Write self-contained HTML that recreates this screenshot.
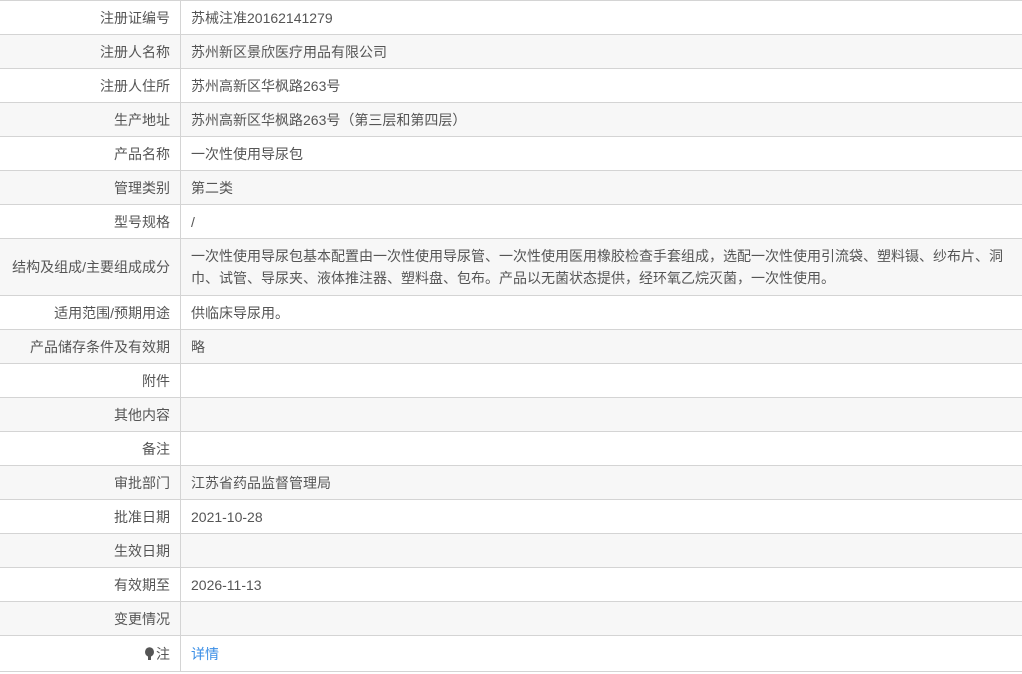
<!DOCTYPE html>
<html><head><meta charset="utf-8"><style>
body{margin:0;background:#fff;font-family:"Liberation Sans","Noto Sans CJK SC",sans-serif;font-size:14px;color:#555;}
.t{width:1022px;border-top:1px solid #d4d4d4;}
.r{display:flex;height:33px;border-bottom:1px solid #d4d4d4;box-sizing:content-box;}
.r:nth-child(even){background:#f7f7f7;}
.l{width:170px;flex:none;text-align:right;padding-right:10px;border-right:1px solid #d4d4d4;display:flex;align-items:center;justify-content:flex-end;}
.v{flex:1;padding:0 10px;display:flex;align-items:center;line-height:22px;}
.tall{height:56px;}
a{color:#3a8ee6;text-decoration:none;}
</style></head><body>
<div class="t">
<div class="r"><div class="l">注册证编号</div><div class="v">苏械注准20162141279</div></div>
<div class="r"><div class="l">注册人名称</div><div class="v">苏州新区景欣医疗用品有限公司</div></div>
<div class="r"><div class="l">注册人住所</div><div class="v">苏州高新区华枫路263号</div></div>
<div class="r"><div class="l">生产地址</div><div class="v">苏州高新区华枫路263号（第三层和第四层）</div></div>
<div class="r"><div class="l">产品名称</div><div class="v">一次性使用导尿包</div></div>
<div class="r"><div class="l">管理类别</div><div class="v">第二类</div></div>
<div class="r"><div class="l">型号规格</div><div class="v">/</div></div>
<div class="r tall"><div class="l">结构及组成/主要组成成分</div><div class="v">一次性使用导尿包基本配置由一次性使用导尿管、一次性使用医用橡胶检查手套组成，选配一次性使用引流袋、塑料镊、纱布片、洞巾、试管、导尿夹、液体推注器、塑料盘、包布。产品以无菌状态提供，经环氧乙烷灭菌，一次性使用。</div></div>
<div class="r"><div class="l">适用范围/预期用途</div><div class="v">供临床导尿用。</div></div>
<div class="r"><div class="l">产品储存条件及有效期</div><div class="v">略</div></div>
<div class="r"><div class="l">附件</div><div class="v"></div></div>
<div class="r"><div class="l">其他内容</div><div class="v"></div></div>
<div class="r"><div class="l">备注</div><div class="v"></div></div>
<div class="r"><div class="l">审批部门</div><div class="v">江苏省药品监督管理局</div></div>
<div class="r"><div class="l">批准日期</div><div class="v">2021-10-28</div></div>
<div class="r"><div class="l">生效日期</div><div class="v"></div></div>
<div class="r"><div class="l">有效期至</div><div class="v">2026-11-13</div></div>
<div class="r"><div class="l">变更情况</div><div class="v"></div></div>
<div class="r" style="height:35px"><div class="l"><svg width="11" height="14" viewBox="0 0 11 14" style="margin-right:1px"><ellipse cx="5.5" cy="5" rx="4.5" ry="4.8" fill="#555"/><rect x="4" y="9" width="3" height="4" fill="#555"/></svg>注</div><div class="v"><a>详情</a></div></div>
</div>
</body></html>
